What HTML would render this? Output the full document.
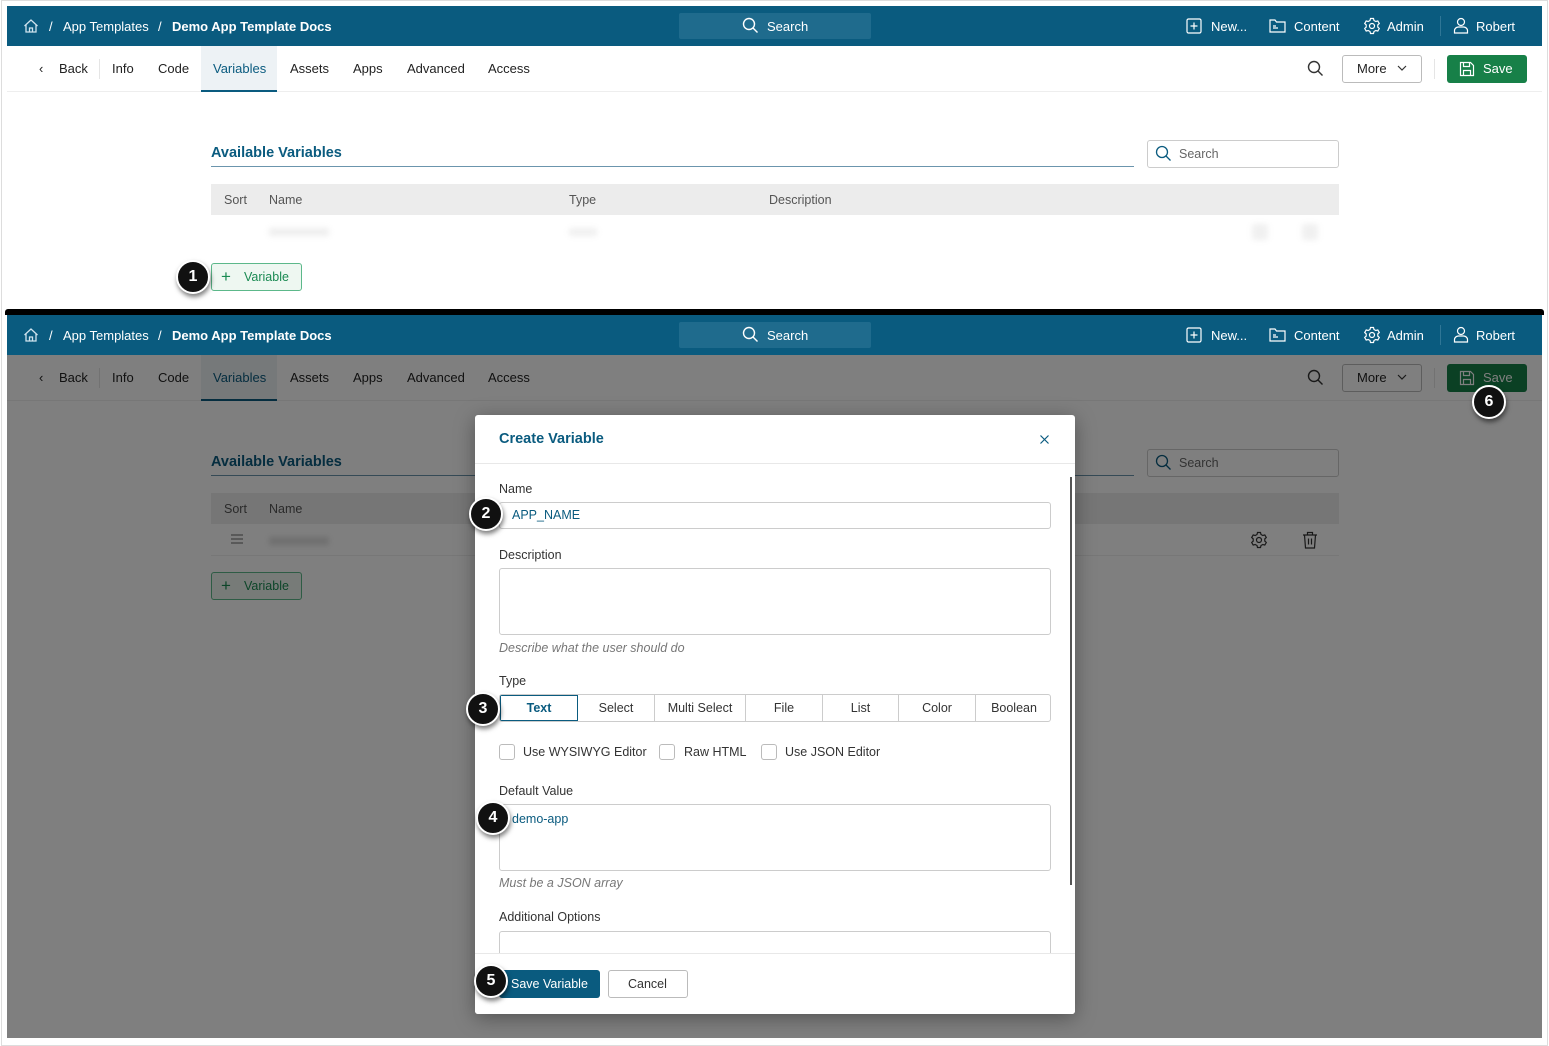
<!DOCTYPE html>
<html><head><meta charset="utf-8">
<style>
*{box-sizing:border-box;margin:0;padding:0}
body{width:1549px;height:1046px;background:#fff;position:relative;overflow:hidden;font-family:"Liberation Sans",sans-serif;font-size:13px;color:#333}
.abs{position:absolute}
.pane{position:absolute;left:7px;width:1535px;overflow:hidden;background:#fff}
.hdr{position:absolute;left:0;top:0;width:100%;height:40px;background:#0a5b7f;color:#fff}
.hdr .t{position:absolute;top:13px;font-size:13px;white-space:nowrap}
.nav .t{position:absolute;top:15px;font-size:13px;color:#222;white-space:nowrap}
.nav{position:absolute;left:0;top:40px;width:100%;height:46px;border-bottom:1px solid #eee}
.circ{position:absolute;width:34px;height:34px;border-radius:50%;background:#111;border:2px solid #fff;color:#fff;font-size:16px;font-weight:bold;text-align:center;line-height:30px;box-shadow:1px 3px 5px rgba(0,0,0,.5);z-index:20}
.lbl{position:absolute;left:24px;font-size:12.5px;color:#333}
.inp{position:absolute;left:24px;width:552px;border:1px solid #ccc;border-radius:3px;background:#fff}
.seg{position:absolute;top:0;height:27px;border-right:1px solid #ccc;text-align:center;line-height:26px;font-size:12.5px;color:#333}
.cb{position:absolute;top:0;width:16px;height:16px;border:1px solid #bbb;border-radius:3px}
.help{position:absolute;left:24px;font-size:12.5px;font-style:italic;color:#777}
</style></head><body>

<!-- frame -->
<div class="abs" style="left:1px;top:0;width:1547px;height:1046px;border:1px solid #ddd"></div>

<!-- ================= TOP PANE ================= -->
<div class="pane" style="top:6px;height:303px">
  <div class="hdr">
    <svg class="abs" style="left:16px;top:12px" width="16" height="16" viewBox="0 0 16 16" fill="none" stroke="#cfe3ee" stroke-width="1.3"><path d="M1.5 8 8 2l6.5 6M3 7v7h10V7M6.5 14v-4h3v4"/></svg>
    <span class="t" style="left:42px">/</span>
    <span class="t" style="left:56px">App Templates</span>
    <span class="t" style="left:151px">/</span>
    <span class="t" style="left:165px;font-weight:bold">Demo App Template Docs</span>
    <div class="abs" style="left:672px;top:7px;width:192px;height:26px;background:#1f6b8d;border-radius:2px"></div>
    <svg class="abs" style="left:735px;top:11px" width="17" height="17" viewBox="0 0 17 17" fill="none" stroke="#fff" stroke-width="1.4"><circle cx="7" cy="7" r="5.5"/><path d="m11 11 4.5 4.5"/></svg>
    <span class="t" style="left:760px">Search</span>
    <svg class="abs" style="left:1179px;top:12px" width="16" height="16" viewBox="0 0 16 16" fill="none" stroke="#fff" stroke-width="1.2"><rect x="1" y="1" width="14" height="14" rx="1.5"/><path d="M8 4.5v7M4.5 8h7"/></svg>
    <span class="t" style="left:1204px">New...</span>
    <svg class="abs" style="left:1262px;top:12px" width="17" height="16" viewBox="0 0 17 16" fill="none" stroke="#fff" stroke-width="1.2"><path d="M1 2h5l1.5 2H16v10H1z M4 10h5M4 8h3"/></svg>
    <span class="t" style="left:1287px">Content</span>
    <svg class="abs" style="left:1356px;top:11px" width="18" height="18" viewBox="0 0 18 18" fill="none" stroke="#fff" stroke-width="1.2"><circle cx="9" cy="9" r="2.5"/><path d="M7.5 1.5h3l.5 2 1.8 1 2-.6 1.5 2.6-1.5 1.4v2.2l1.5 1.4-1.5 2.6-2-.6-1.8 1-.5 2h-3l-.5-2-1.8-1-2 .6-1.5-2.6 1.5-1.4V7.9L1.7 6.5l1.5-2.6 2 .6 1.8-1z"/></svg>
    <span class="t" style="left:1380px">Admin</span>
    <div class="abs" style="left:1433px;top:10px;width:1px;height:20px;background:#2f7696"></div>
    <svg class="abs" style="left:1446px;top:11px" width="16" height="17" viewBox="0 0 16 17" fill="none" stroke="#fff" stroke-width="1.2"><circle cx="8" cy="5" r="3.5"/><path d="M1.5 16v-2.5c0-2 2-3.5 4-3.5h5c2 0 4 1.5 4 3.5V16z"/></svg>
    <span class="t" style="left:1469px">Robert</span>
  </div>
  <div class="nav">
    <span class="t" style="left:32px">&lsaquo;</span>
    <span class="t" style="left:52px">Back</span>
    <div class="abs" style="left:92px;top:13px;width:1px;height:20px;background:#e5e5e5"></div>
    <span class="t" style="left:105px">Info</span>
    <span class="t" style="left:151px">Code</span>
    <div class="abs" style="left:194px;top:0;width:76px;height:46px;background:#edf2f5;border-bottom:2px solid #0a5b7f"></div>
    <span class="t" style="left:206px;color:#0a5b7f">Variables</span>
    <span class="t" style="left:283px">Assets</span>
    <span class="t" style="left:346px">Apps</span>
    <span class="t" style="left:400px">Advanced</span>
    <span class="t" style="left:481px">Access</span>
    <svg class="abs" style="left:1300px;top:14px" width="17" height="17" viewBox="0 0 17 17" fill="none" stroke="#333" stroke-width="1.4"><circle cx="7" cy="7" r="5.5"/><path d="m11 11 4.5 4.5"/></svg>
    <div class="abs" style="left:1335px;top:9px;width:80px;height:28px;border:1px solid #bbb;border-radius:3px"></div>
    <span class="t" style="left:1350px">More</span>
    <svg class="abs" style="left:1390px;top:19px" width="10" height="7" viewBox="0 0 10 7" fill="none" stroke="#333" stroke-width="1.2"><path d="m1 1 4 4 4-4"/></svg>
    <div class="abs" style="left:1427px;top:13px;width:1px;height:20px;background:#e5e5e5"></div>
    <div class="abs" style="left:1440px;top:9px;width:80px;height:28px;background:#178048;border-radius:3px"></div>
    <svg class="abs" style="left:1452px;top:15px" width="16" height="16" viewBox="0 0 16 16" fill="none" stroke="#fff" stroke-width="1.2"><path d="M1.5 1.5h10l3 3v10h-13z M4.5 1.5v4h6v-4 M4.5 14.5v-5h7v5"/></svg>
    <span class="t" style="left:1476px;color:#fff">Save</span>
  </div>
  <!-- content -->
  <span class="abs" style="left:204px;top:139px;font-size:14.5px;font-weight:bold;color:#0a5b7f">Available Variables</span>
  <div class="abs" style="left:204px;top:160px;width:923px;height:1px;background:#6b95ad"></div>
  <div class="abs" style="left:1140px;top:134px;width:192px;height:28px;border:1px solid #ccc;border-radius:3px"></div>
  <svg class="abs" style="left:1148px;top:139px" width="17" height="17" viewBox="0 0 17 17" fill="none" stroke="#0a5b7f" stroke-width="1.3"><circle cx="7" cy="7" r="5.5"/><path d="m11 11 4.5 4.5"/></svg>
  <span class="abs" style="left:1172px;top:141px;color:#666;font-size:12.5px">Search</span>
  <div class="abs" style="left:204px;top:178px;width:1128px;height:31px;background:#ececec"></div>
  <span class="abs" style="left:217px;top:187px;color:#555;font-size:12.5px">Sort</span>
  <span class="abs" style="left:262px;top:187px;color:#555;font-size:12.5px">Name</span>
  <span class="abs" style="left:562px;top:187px;color:#555;font-size:12.5px">Type</span>
  <span class="abs" style="left:762px;top:187px;color:#555;font-size:12.5px">Description</span>
  <div class="abs" style="left:262px;top:222px;width:60px;height:8px;background:#eee;filter:blur(3px)"></div>
  <div class="abs" style="left:562px;top:222px;width:28px;height:8px;background:#f0f0f0;filter:blur(3px)"></div>
  <div class="abs" style="left:1245px;top:218px;width:16px;height:16px;background:#f0f0f0;filter:blur(3px)"></div>
  <div class="abs" style="left:1295px;top:218px;width:16px;height:16px;background:#f0f0f0;filter:blur(3px)"></div>
  <div class="abs" style="left:204px;top:257px;width:91px;height:28px;background:#eef7f1;border:1px solid #5cb88a;border-radius:3px"></div>
  <span class="abs" style="left:214px;top:261px;color:#1a8a52;font-size:17px">+</span>
  <span class="abs" style="left:237px;top:264px;color:#1a8a52;font-size:12.5px">Variable</span>
</div>
<div class="circ" style="left:176px;top:260px">1</div>

<!-- black divider -->
<div class="abs" style="left:5px;top:309px;width:1539px;height:6px;background:#000;border-radius:3px 3px 0 0"></div>

<!-- ================= BOTTOM PANE ================= -->
<div class="pane" style="top:315px;height:723px">
  <div class="hdr">
    <svg class="abs" style="left:16px;top:12px" width="16" height="16" viewBox="0 0 16 16" fill="none" stroke="#cfe3ee" stroke-width="1.3"><path d="M1.5 8 8 2l6.5 6M3 7v7h10V7M6.5 14v-4h3v4"/></svg>
    <span class="t" style="left:42px">/</span>
    <span class="t" style="left:56px">App Templates</span>
    <span class="t" style="left:151px">/</span>
    <span class="t" style="left:165px;font-weight:bold">Demo App Template Docs</span>
    <div class="abs" style="left:672px;top:7px;width:192px;height:26px;background:#1f6b8d;border-radius:2px"></div>
    <svg class="abs" style="left:735px;top:11px" width="17" height="17" viewBox="0 0 17 17" fill="none" stroke="#fff" stroke-width="1.4"><circle cx="7" cy="7" r="5.5"/><path d="m11 11 4.5 4.5"/></svg>
    <span class="t" style="left:760px">Search</span>
    <svg class="abs" style="left:1179px;top:12px" width="16" height="16" viewBox="0 0 16 16" fill="none" stroke="#fff" stroke-width="1.2"><rect x="1" y="1" width="14" height="14" rx="1.5"/><path d="M8 4.5v7M4.5 8h7"/></svg>
    <span class="t" style="left:1204px">New...</span>
    <svg class="abs" style="left:1262px;top:12px" width="17" height="16" viewBox="0 0 17 16" fill="none" stroke="#fff" stroke-width="1.2"><path d="M1 2h5l1.5 2H16v10H1z M4 10h5M4 8h3"/></svg>
    <span class="t" style="left:1287px">Content</span>
    <svg class="abs" style="left:1356px;top:11px" width="18" height="18" viewBox="0 0 18 18" fill="none" stroke="#fff" stroke-width="1.2"><circle cx="9" cy="9" r="2.5"/><path d="M7.5 1.5h3l.5 2 1.8 1 2-.6 1.5 2.6-1.5 1.4v2.2l1.5 1.4-1.5 2.6-2-.6-1.8 1-.5 2h-3l-.5-2-1.8-1-2 .6-1.5-2.6 1.5-1.4V7.9L1.7 6.5l1.5-2.6 2 .6 1.8-1z"/></svg>
    <span class="t" style="left:1380px">Admin</span>
    <div class="abs" style="left:1433px;top:10px;width:1px;height:20px;background:#2f7696"></div>
    <svg class="abs" style="left:1446px;top:11px" width="16" height="17" viewBox="0 0 16 17" fill="none" stroke="#fff" stroke-width="1.2"><circle cx="8" cy="5" r="3.5"/><path d="M1.5 16v-2.5c0-2 2-3.5 4-3.5h5c2 0 4 1.5 4 3.5V16z"/></svg>
    <span class="t" style="left:1469px">Robert</span>
  </div>
  <div class="nav">
    <span class="t" style="left:32px">&lsaquo;</span>
    <span class="t" style="left:52px">Back</span>
    <div class="abs" style="left:92px;top:13px;width:1px;height:20px;background:#e5e5e5"></div>
    <span class="t" style="left:105px">Info</span>
    <span class="t" style="left:151px">Code</span>
    <div class="abs" style="left:194px;top:0;width:76px;height:46px;background:#edf2f5;border-bottom:2px solid #0a5b7f"></div>
    <span class="t" style="left:206px;color:#0a5b7f">Variables</span>
    <span class="t" style="left:283px">Assets</span>
    <span class="t" style="left:346px">Apps</span>
    <span class="t" style="left:400px">Advanced</span>
    <span class="t" style="left:481px">Access</span>
    <svg class="abs" style="left:1300px;top:14px" width="17" height="17" viewBox="0 0 17 17" fill="none" stroke="#333" stroke-width="1.4"><circle cx="7" cy="7" r="5.5"/><path d="m11 11 4.5 4.5"/></svg>
    <div class="abs" style="left:1335px;top:9px;width:80px;height:28px;border:1px solid #bbb;border-radius:3px"></div>
    <span class="t" style="left:1350px">More</span>
    <svg class="abs" style="left:1390px;top:19px" width="10" height="7" viewBox="0 0 10 7" fill="none" stroke="#333" stroke-width="1.2"><path d="m1 1 4 4 4-4"/></svg>
    <div class="abs" style="left:1427px;top:13px;width:1px;height:20px;background:#e5e5e5"></div>
    <div class="abs" style="left:1440px;top:9px;width:80px;height:28px;background:#178048;border-radius:3px"></div>
    <svg class="abs" style="left:1452px;top:15px" width="16" height="16" viewBox="0 0 16 16" fill="none" stroke="#fff" stroke-width="1.2"><path d="M1.5 1.5h10l3 3v10h-13z M4.5 1.5v4h6v-4 M4.5 14.5v-5h7v5"/></svg>
    <span class="t" style="left:1476px;color:#fff">Save</span>
  </div>
  <span class="abs" style="left:204px;top:139px;font-size:14.5px;font-weight:bold;color:#0a5b7f">Available Variables</span>
  <div class="abs" style="left:204px;top:160px;width:923px;height:1px;background:#6b95ad"></div>
  <div class="abs" style="left:1140px;top:134px;width:192px;height:28px;border:1px solid #ccc;border-radius:3px"></div>
  <svg class="abs" style="left:1148px;top:139px" width="17" height="17" viewBox="0 0 17 17" fill="none" stroke="#0a5b7f" stroke-width="1.3"><circle cx="7" cy="7" r="5.5"/><path d="m11 11 4.5 4.5"/></svg>
  <span class="abs" style="left:1172px;top:141px;color:#666;font-size:12.5px">Search</span>
  <div class="abs" style="left:204px;top:178px;width:1128px;height:31px;background:#ececec"></div>
  <span class="abs" style="left:217px;top:187px;color:#555;font-size:12.5px">Sort</span>
  <span class="abs" style="left:262px;top:187px;color:#555;font-size:12.5px">Name</span>
  <svg class="abs" style="left:224px;top:219px" width="12" height="10" viewBox="0 0 12 10" stroke="#666" stroke-width="1.1"><path d="M0 1h12M0 5h12M0 9h12"/></svg>
  <div class="abs" style="left:262px;top:222px;width:60px;height:8px;background:#ddd;filter:blur(3px)"></div>
  <div class="abs" style="left:204px;top:240px;width:1128px;height:1px;background:#eee"></div>
  <svg class="abs" style="left:1243px;top:216px" width="18" height="18" viewBox="0 0 18 18" fill="none" stroke="#333" stroke-width="1.2"><circle cx="9" cy="9" r="2.5"/><path d="M7.5 1.5h3l.5 2 1.8 1 2-.6 1.5 2.6-1.5 1.4v2.2l1.5 1.4-1.5 2.6-2-.6-1.8 1-.5 2h-3l-.5-2-1.8-1-2 .6-1.5-2.6 1.5-1.4V7.9L1.7 6.5l1.5-2.6 2 .6 1.8-1z"/></svg>
  <svg class="abs" style="left:1295px;top:216px" width="16" height="18" viewBox="0 0 16 18" fill="none" stroke="#333" stroke-width="1.2"><path d="M1 4h14M5.5 4V1.5h5V4M2.5 4l1 13h9l1-13M6.5 7.5v6M9.5 7.5v6"/></svg>
  <div class="abs" style="left:204px;top:257px;width:91px;height:28px;background:#eef7f1;border:1px solid #5cb88a;border-radius:3px"></div>
  <span class="abs" style="left:214px;top:261px;color:#1a8a52;font-size:17px">+</span>
  <span class="abs" style="left:237px;top:264px;color:#1a8a52;font-size:12.5px">Variable</span>
  <!-- overlay -->
  <div class="abs" style="left:0;top:40px;width:100%;height:683px;background:rgba(0,0,0,.5)"></div>
</div>
<div class="circ" style="left:1472px;top:385px">6</div>

<!-- ================= MODAL ================= -->
<div class="abs" style="left:475px;top:415px;width:600px;height:599px;background:#fff;border-radius:3px;box-shadow:0 4px 20px rgba(0,0,0,.35);overflow:hidden;z-index:10">
  <span class="abs" style="left:24px;top:16px;font-size:14.5px;font-weight:bold;color:#0a5b7f">Create Variable</span>
  <svg class="abs" style="left:565px;top:20px" width="9" height="9" viewBox="0 0 9 9" stroke="#0a5b7f" stroke-width="1.2"><path d="m0.5 0.5 8 8M8.5 0.5l-8 8"/></svg>
  <div class="abs" style="left:0;top:48px;width:600px;height:1px;background:#e8e8e8"></div>
  <div class="abs" style="left:595px;top:62px;width:2px;height:408px;background:#555"></div>

  <span class="lbl" style="top:67px">Name</span>
  <div class="inp" style="top:87px;height:27px"></div>
  <span class="abs" style="left:37px;top:93px;color:#0a5b7f;font-size:12.5px">APP_NAME</span>

  <span class="lbl" style="top:133px">Description</span>
  <div class="inp" style="top:153px;height:67px"></div>
  <span class="help" style="top:226px">Describe what the user should do</span>

  <span class="lbl" style="top:259px">Type</span>
  <div class="abs" style="left:24px;top:279px;width:552px;height:28px;border:1px solid #ccc;border-radius:3px;overflow:hidden">
    <div class="seg" style="left:0;width:78px;border:1px solid #0a5b7f;color:#0a5b7f;font-weight:bold;line-height:24px;height:26px">Text</div>
    <div class="seg" style="left:78px;width:77px">Select</div>
    <div class="seg" style="left:155px;width:91px">Multi Select</div>
    <div class="seg" style="left:246px;width:77px">File</div>
    <div class="seg" style="left:323px;width:76px">List</div>
    <div class="seg" style="left:399px;width:77px">Color</div>
    <div class="seg" style="left:476px;width:76px;border-right:none">Boolean</div>
  </div>

  <div class="abs" style="left:24px;top:329px;width:560px;height:18px">
    <div class="cb" style="left:0"></div><span class="abs" style="left:24px;top:1px;font-size:12.5px">Use WYSIWYG Editor</span>
    <div class="cb" style="left:160px"></div><span class="abs" style="left:185px;top:1px;font-size:12.5px">Raw HTML</span>
    <div class="cb" style="left:262px"></div><span class="abs" style="left:286px;top:1px;font-size:12.5px">Use JSON Editor</span>
  </div>

  <span class="lbl" style="top:369px">Default Value</span>
  <div class="inp" style="top:389px;height:67px"></div>
  <span class="abs" style="left:37px;top:397px;color:#0a5b7f;font-size:12.5px">demo-app</span>
  <span class="help" style="top:461px">Must be a JSON array</span>

  <span class="lbl" style="top:495px">Additional Options</span>
  <div class="inp" style="top:516px;height:40px"></div>

  <div class="abs" style="left:0;top:538px;width:600px;height:61px;background:#fff;border-top:1px solid #e8e8e8"></div>
  <div class="abs" style="left:24px;top:555px;width:101px;height:28px;background:#0a5b7f;border-radius:3px"></div>
  <span class="abs" style="left:36px;top:562px;color:#fff;font-size:12.5px">Save Variable</span>
  <div class="abs" style="left:133px;top:555px;width:80px;height:28px;border:1px solid #bbb;border-radius:3px"></div>
  <span class="abs" style="left:153px;top:562px;font-size:12.5px">Cancel</span>
</div>
<div class="circ" style="left:469px;top:497px">2</div>
<div class="circ" style="left:466px;top:692px">3</div>
<div class="circ" style="left:476px;top:801px">4</div>
<div class="circ" style="left:474px;top:964px">5</div>

</body></html>
